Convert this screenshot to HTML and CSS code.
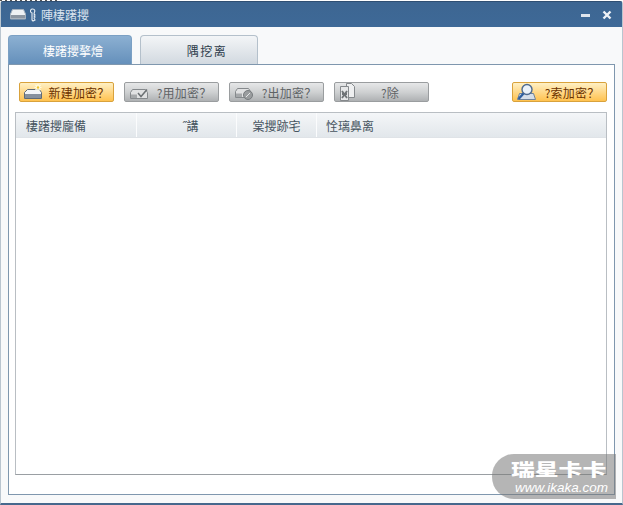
FILE: index.html
```html
<!DOCTYPE html>
<html lang="zh">
<head>
<meta charset="utf-8">
<title>陣棲躇攖</title>
<link rel="stylesheet" href="styles.css">
</head>
<body>
<div class="top-strip"></div>
<div class="window">
  <header class="titlebar">
    <svg class="app-icon" width="16" height="11" viewBox="0 0 16 11"><path d="M2.500.5h11l2 4.500v5H.5V5z" fill="#eef1f4" stroke="#a5b1be"/><rect x="1" y="6" width="14" height="3.500" fill="#8c96a2"/></svg>
    <svg class="key-icon" width="6" height="14" viewBox="0 0 6 14"><path d="M3 1a2 2 0 0 1 1.500 3L4 6l1 1-1 1 1 1-1 1 1 2-2 1-1-1V5A2 2 0 0 1 3 1z" fill="none" stroke="#e6edf4" stroke-width="1.100"/></svg>
    <span class="title">陣棲躇攖</span>
    <div class="controls">
      <svg width="10" height="10" viewBox="0 0 10 10"><rect y="4" width="9" height="3" fill="#dfe5ec"/></svg>
      <svg width="10" height="10" viewBox="0 0 10 10"><path d="M1.500 1.500l7 7M8.500 1.500l-7 7" stroke="#eef2f6" stroke-width="2.400"/></svg>
    </div>
  </header>
  <main class="content">
    <nav class="tabs">
      <div class="tab tab-active">棲躇攖摮燴</div>
      <div class="tab tab-second">隅挖离</div>
    </nav>
    <section class="panel">
      <div class="toolbar">
        <button class="btn btn-gold">
          <svg width="22" height="16" viewBox="0 0 22 16"><path d="M4.500 5.500h12l2 3v6H1.500v-6z" fill="#f3f5f7" stroke="#5f6b78"/><rect x="2" y="10" width="16" height="4" fill="#87919d"/><path d="M15 0v7M11.500 3.500h7M12.500 1l5 5M17.500 1l-5 5" stroke="#fffde0" stroke-width="1.200"/><circle cx="15" cy="3.500" r="1.200" fill="#f0c030"/></svg>
          <span class="btn-label">新建加密？</span>
        </button>
        <button class="btn btn-grey">
          <svg width="22" height="16" viewBox="0 0 22 16"><path d="M4.500 5.500h13l2 3v6H2.500v-6z" fill="#e0e1e2" stroke="#85898c"/><rect x="3" y="10.500" width="6" height="3.500" fill="#a5a8aa"/><path d="M10 9l3 3.500 6-7" fill="none" stroke="#6c7174" stroke-width="1.500"/></svg>
          <span class="btn-label">?用加密？</span>
        </button>
        <button class="btn btn-grey">
          <svg width="22" height="16" viewBox="0 0 22 16"><path d="M4.500 4.500h11l2 3v6H2.500v-6z" fill="#e0e1e2" stroke="#85898c"/><rect x="3" y="9.500" width="6" height="3.500" fill="#a5a8aa"/><circle cx="15" cy="11" r="4.500" fill="#9a9d9f" stroke="#777b7e"/><path d="M13 13l4-4" stroke="#e4e6e7"/></svg>
          <span class="btn-label">?出加密？</span>
        </button>
        <button class="btn btn-grey">
          <svg width="20" height="18" viewBox="0 0 20 18"><path d="M8.500.5h5l3 3v11h-8z" fill="#eeeff0" stroke="#85898c"/><path d="M2.500 3.500h8v14h-8z" fill="#e6e7e8" stroke="#85898c"/><path d="M4 8l5 7M9 8l-5 7M4 11h5" stroke="#6f7376" stroke-width="1.800"/></svg>
          <span class="btn-label btn-label-short">?除</span>
        </button>
        <button class="btn btn-gold btn-search">
          <svg width="22" height="18" viewBox="0 0 22 18"><path d="M1.500 16.500h18l-2-6h-14z" fill="#d5dee9" stroke="#6f8299"/><circle cx="11" cy="6.500" r="5" fill="#eaf2fa" stroke="#4d6a8f" stroke-width="1.400"/><path d="M7.500 10.500l-5 5.500" stroke="#2f5f9f" stroke-width="2.400"/></svg>
          <span class="btn-label">?索加密？</span>
        </button>
      </div>
      <div class="table">
        <div class="thead">
          <div class="th col-1">棲躇攖龐備</div>
          <div class="th col-2">˝講</div>
          <div class="th col-3">棠攖跡宅</div>
          <div class="th col-4">恮璃鼻离</div>
        </div>
      </div>
    </section>
  </main>
</div>
<div class="watermark">
  <div class="wm-brand">瑞星卡卡</div>
  <div class="wm-url">www.ikaka.com</div>
</div>
</body>
</html>
```
FILE: styles.css
```css
* { box-sizing: border-box; }

html, body {
  margin: 0;
  width: 623px;
  height: 505px;
  overflow: hidden;
  background: #fff;
}

body {
  font-family: "Noto Sans CJK SC", "Liberation Sans", sans-serif;
  font-size: 12px;
  position: relative;
}

.top-strip {
  width: 60px;
  height: 1px;
  background: repeating-linear-gradient(90deg, #555 0 2px, #fff 2px 5px);
}

.window {
  width: 623px;
  height: 504px;
  display: flex;
  flex-direction: column;
  background: #f8f9fa;
  border: 1px solid #b9c5cf;
  border-top: 1px solid #2f4f73;
  border-bottom: 2px solid #46688d;
  border-radius: 3px 3px 0 0;
}

.titlebar {
  height: 25px;
  flex: none;
  display: flex;
  align-items: center;
  padding: 0 9px;
  background: linear-gradient(#3d6692, #3e6997);
  color: #d9e3ee;
}

.app-icon { margin-right: 4px; }
.key-icon { margin-right: 5px; }

.title {
  font-size: 12px;
  line-height: 14px;
}

.controls {
  margin-left: auto;
  display: flex;
  gap: 11px;
  padding-right: 1px;
}

.content {
  flex: 1;
  display: flex;
  flex-direction: column;
  padding: 8px 7px;
}

.tabs {
  display: flex;
  gap: 8px;
  height: 29px;
  flex: none;
}

.tab {
  width: 118px;
  display: flex;
  align-items: center;
  justify-content: center;
  border: 1px solid #b4c0cb;
  border-bottom: none;
  border-radius: 4px 4px 0 0;
  background: linear-gradient(#f3f5f7, #d2d9e0);
  color: #2c3a4a;
}

.tab-active {
  width: 124px;
  padding-left: 6px;
  border-color: #7ba0c4;
  background: linear-gradient(#8cb0d2, #6590bb);
  color: #fff;
}

.tab-second {
  letter-spacing: 1.500px;
  padding-left: 16px;
}

.panel {
  flex: 1;
  display: flex;
  flex-direction: column;
  border: 1px solid #7f97ae;
  background: #fff;
  padding: 17px 7px 19px 6px;
}

.toolbar {
  display: flex;
  gap: 10px;
  height: 20px;
  flex: none;
  padding-left: 4px;
  margin-bottom: 10px;
}

.btn {
  width: 95px;
  height: 20px;
  padding: 0 0 0 3px;
  display: flex;
  align-items: center;
  font: inherit;
  border-radius: 2px;
  border: 1px solid;
}

.btn svg { flex: none; }

.btn-label {
  flex: 1;
  text-align: center;
  letter-spacing: 0.2px;
}

.btn-label-short { padding-right: 6px; }

.btn-gold {
  border-color: #d9a23c;
  background: linear-gradient(#fff0c4, #ffd98a 50%, #ffc24f);
  color: #6b3200;
}

.btn-grey {
  border-color: #9a9d9f;
  background: linear-gradient(#e6e7e8, #cfd1d2 50%, #aeb1b3);
  color: #5f6366;
}

.btn-search { margin-left: 73px; }

.table {
  flex: 1;
  border: 1px solid #b9bec3;
  border-bottom-color: #9a9fa3;
}

.thead {
  display: flex;
  height: 25px;
  background: linear-gradient(#f4f6f8, #e2e7eb);
  border-bottom: 1px solid #dfe3e7;
}

.th {
  display: flex;
  align-items: center;
  color: #46545f;
  border-right: 1px solid #fbfcfd;
}

.col-1 { width: 121px; padding-left: 10px; }
.col-2 { width: 100px; justify-content: center; padding-left: 8px; }
.col-3 { width: 80px; justify-content: center; }
.col-4 { flex: 1; padding-left: 9px; border-right: none; }

.watermark {
  position: absolute;
  left: 492px;
  top: 454px;
  width: 124px;
  height: 45px;
  border-radius: 22px 0 0 22px;
  background: rgba(120, 120, 120, 0.55);
  color: #fff;
  display: flex;
  flex-direction: column;
  align-items: flex-end;
  padding: 6px 8px 0 0;
  gap: 2px;
}

.wm-brand {
  width: 97px;
  font-size: 17px;
  font-weight: 900;
  line-height: 18px;
  white-space: nowrap;
  transform: scaleX(1.4);
  transform-origin: 0 50%;
}

.wm-url {
  font-family: "Liberation Sans", sans-serif;
  font-size: 13.500px;
  font-style: italic;
  line-height: 15px;
  white-space: nowrap;
}
```
